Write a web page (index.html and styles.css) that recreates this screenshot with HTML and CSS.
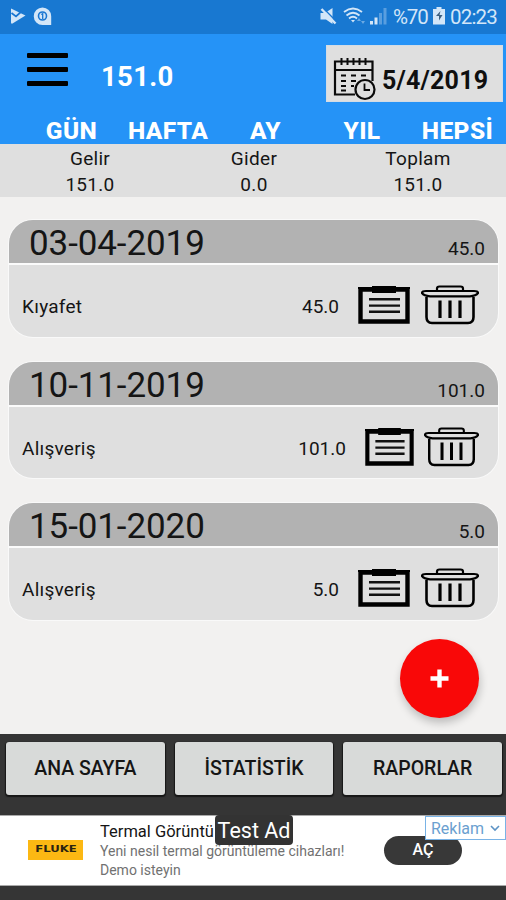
FILE: index.html
```html
<!DOCTYPE html>
<html lang="tr">
<head>
    <meta charset="UTF-8">
    <title>Gelir Gider</title>
    <link rel="stylesheet" href="styles.css">
</head>
<body>
<svg class="defs" width="0" height="0">
    <symbol id="note" viewBox="0 0 52 38" preserveAspectRatio="none">
        <path d="M2.500 3.500H49.500V35.500H2.500Z" fill="none" stroke="#000" stroke-width="4.400"/>
        <path d="M0 1h52v2H0zM14 0h24v7H14z"/>
        <path d="M11 13.200H42M11 19.600H42M11 25.800H42" stroke="#111" stroke-width="2.400"/>
    </symbol>
    <symbol id="trash" viewBox="0 0 58 40" preserveAspectRatio="none">
        <g fill="none" stroke="#000" stroke-width="2.200">
            <path d="M16 6V3.500Q16 1.500 18.500 1.500H39.500Q42 1.500 42 3.500V6"/>
            <path d="M5 6H53Q57 6 57 8.200Q55 11 49 11.300H9Q3 11 1 8.200Q1 6 5 6Z"/>
            <path d="M5.500 12V32Q5.500 38 11 38H47Q52.500 38 52.500 32V12" stroke-width="2.600"/>
            <path d="M19 15.500V33M29 15.500V33M39 15.500V33" stroke-width="3.200"/>
        </g>
    </symbol>
</svg>

<div class="statusbar">
    <svg width="44" height="20" viewBox="0 0 44 20" fill="#d3e6f8">
        <path d="M1 1.500L15.500 8.500L2.500 16.500Q1 17 1 15.500Z"/>
        <path d="M1.500 6L6 9.500L12 4" fill="none" stroke="#1976d2" stroke-width="1.700"/>
        <path d="M32.500 0.500a8.700 8.700 0 1 0 0 17.500h8.700V9.200a8.700 8.700 0 0 0-8.700-8.700z"/>
        <circle cx="32.500" cy="9" r="4" fill="none" stroke="#1976d2" stroke-width="1.600"/>
        <path d="M31.300 7.500L32.700 6.700V12" fill="none" stroke="#1976d2" stroke-width="1.300"/>
    </svg>
    <div class="status-right">
        <svg width="68" height="20" viewBox="0 0 68 20" fill="#d3e6f8">
            <path d="M0.500 6H5L12.500 1V17L6 12.500H0.500Z"/>
            <path d="M3 1L17 15" stroke="#1976d2" stroke-width="1.500"/>
            <path d="M1.500 2L15.500 16.500" stroke="#d3e6f8" stroke-width="2.400"/>
            <g fill="none" stroke="#d3e6f8" stroke-width="1.800">
                <path d="M24 5Q33 -2 42 5M26.500 8.500Q33 3 39.500 8.500M29 11.500Q33 8 37 11.500"/>
            </g>
            <path d="M31 13h4l-2 2.500z"/>
            <path d="M37 14l2-3 2 3zM41 14h4l-2 3z" opacity=".45"/>
            <path d="M50 14h3v3.500h-3zM54.500 10.500h3v7h-3z"/>
            <path d="M59 6h3v11.500h-3zM63.500 1h3v16.500h-3z" opacity=".35"/>
        </svg>
        <span class="percent">%70</span>
        <svg width="12" height="18" viewBox="0 0 12 18">
            <path d="M3.500 0h5v2H12v15.500H0V2H3.500z" fill="#d3e6f8"/>
            <path d="M7.500 4L3 9h3v4.500L9.500 8H6.500z" fill="#3c5f80"/>
        </svg>
        <span class="clock">02:23</span>
    </div>
</div>

<div class="header">
    <div class="toolbar">
        <div class="menu"><i></i><i></i><i></i></div>
        <span class="balance">151.0</span>
        <div class="datepicker">
            <svg width="43" height="44" viewBox="0 0 43 44" fill="none" stroke="#0a0a0a" stroke-width="2.200">
                <path d="M22 37.500H2V4.500H39.500V24M2 13H39.500"/>
                <path d="M8.500 1V8M14.500 1V8M20.500 1V8M26.500 1V8M32.500 1V8" stroke-width="2"/>
                <path d="M8 18.500h5M18 18.500h5M28 18.500h5M8 24h5M18 24h5M8 29h5M18 29h3M8 33.500h5" stroke-width="2"/>
                <circle cx="32" cy="32.500" r="9.500" fill="#dfdfdf"/>
                <path d="M31.500 26.500V33H37" stroke-width="1.800"/>
            </svg>
            <span>5/4/2019</span>
        </div>
    </div>
    <div class="tabs">
        <span>GÜN</span>
        <span>HAFTA</span>
        <span>AY</span>
        <span>YIL</span>
        <span>HEPSİ</span>
    </div>
</div>

<div class="summary">
    <div>Gelir<br>151.0</div>
    <div>Gider<br>0.0</div>
    <div>Toplam<br>151.0</div>
</div>

<div class="list">
    <div class="card">
        <div class="card-head"><span class="date">03-04-2019</span><span>45.0</span></div>
        <div class="card-row">
            <span class="name">Kıyafet</span>
            <span class="amount">45.0</span>
            <svg class="note"><use href="#note"/></svg>
            <svg class="trash"><use href="#trash"/></svg>
        </div>
    </div>
    <div class="card">
        <div class="card-head"><span class="date">10-11-2019</span><span>101.0</span></div>
        <div class="card-row narrow">
            <span class="name">Alışveriş</span>
            <span class="amount">101.0</span>
            <svg class="note"><use href="#note"/></svg>
            <svg class="trash"><use href="#trash"/></svg>
        </div>
    </div>
    <div class="card">
        <div class="card-head"><span class="date">15-01-2020</span><span>5.0</span></div>
        <div class="card-row">
            <span class="name">Alışveriş</span>
            <span class="amount">5.0</span>
            <svg class="note"><use href="#note"/></svg>
            <svg class="trash"><use href="#trash"/></svg>
        </div>
    </div>
    <div class="add">
        <svg width="19" height="19" viewBox="0 0 20 20"><path d="M10 0.500V19.500M0.500 10H19.500" stroke="#fff" stroke-width="4.600"/></svg>
    </div>
</div>

<div class="bottom">
    <div class="nav">
        <div class="nav-btn">ANA SAYFA</div>
        <div class="nav-btn">İSTATİSTİK</div>
        <div class="nav-btn">RAPORLAR</div>
    </div>
    <div class="ad">
        <div class="logo"><span>FLUKE</span></div>
        <div class="ad-text">
            <div class="ad-title">Termal Görüntü</div>
            <div class="ad-desc">Yeni nesil termal görüntüleme cihazları!</div>
            <div class="ad-desc">Demo isteyin</div>
        </div>
        <div class="open">AÇ</div>
        <div class="test">Test Ad</div>
        <div class="reklam">Reklam
            <svg width="10" height="7" viewBox="0 0 10 7"><path d="M1 1L5 5L9 1" fill="none" stroke="#5d93c5" stroke-width="1.600"/></svg>
        </div>
    </div>
</div>
</body>
</html>
```
FILE: styles.css
```css
* {
    box-sizing: border-box;
}
body {
    margin: 0;
    width: 506px;
    height: 900px;
    overflow: hidden;
    display: flex;
    flex-direction: column;
    background: #f2f1f0;
    color: #151515;
    font-family: Roboto, sans-serif;
    font-size: 19px;
}
svg {
    display: block;
    flex: none;
}
.defs {
    position: absolute;
}
.statusbar {
    height: 34px;
    flex: none;
    background: #1878d1;
    color: #d3e6f8;
    display: flex;
    justify-content: space-between;
    padding: 7px 9px 0 10px;
}
.status-right {
    display: flex;
    align-items: flex-start;
    font-size: 20.500px;
    line-height: 21px;
}
.percent {
    width: 34px;
    margin: 0 6px 0 5px;
    letter-spacing: -1.2px;
    white-space: nowrap;
}
.clock {
    width: 47px;
    margin-left: 5px;
    letter-spacing: -0.8px;
    white-space: nowrap;
}
.header {
    height: 110px;
    flex: none;
    background: #2593f7;
    color: #fff;
}
.toolbar {
    height: 79px;
    display: flex;
    padding: 11px 3px 0 27px;
}
.menu {
    width: 41px;
    padding-top: 8px;
    display: flex;
    flex-direction: column;
    gap: 9px;
}
.menu i {
    height: 5px;
    background: #000;
    border-radius: 1px;
}
.balance {
    margin: 15px 0 0 33px;
    font-size: 27.500px;
    font-weight: 700;
    line-height: 33px;
    letter-spacing: 0.3px;
}
.datepicker {
    width: 177px;
    height: 57px;
    margin-left: auto;
    padding: 11px 0 0 6px;
    background: #dfdfdf;
    border: 1px solid #d3dce5;
    color: #0f0f0f;
    display: flex;
    gap: 6px;
    font-size: 25px;
    font-weight: 700;
    letter-spacing: 0.2px;
}
.datepicker span {
    line-height: 47px;
}
.tabs {
    height: 31px;
    display: grid;
    grid-template-columns: 101px 92px 103px 90px 101px;
    padding: 3px 0 0 21px;
    font-size: 24.500px;
    font-weight: 800;
    line-height: 30px;
    letter-spacing: 0.4px;
    text-align: center;
}
.summary {
    height: 53px;
    flex: none;
    background: #dfdfdf;
    display: grid;
    grid-template-columns: 164px 164px 164px;
    padding: 2px 0 0 8px;
    line-height: 26px;
    letter-spacing: 0.3px;
    text-align: center;
}
.list {
    height: 537px;
    flex: none;
    padding: 23px 8px 0 9px;
    display: flex;
    flex-direction: column;
    gap: 25px;
    position: relative;
}
.card {
    height: 116.500px;
    flex: none;
    border-radius: 24px;
    overflow: hidden;
    background: #dfdfdf;
    box-shadow: 0 0 0 1px #f9f9f9;
}
.card-head {
    height: 45px;
    background: #b2b2b2;
    border-bottom: 2px solid #fbfbfb;
    display: flex;
    justify-content: space-between;
    align-items: baseline;
    padding: 3px 13px 0 20px;
}
.date {
    font-size: 35px;
    line-height: 41px;
    letter-spacing: -0.1px;
}
.card-row {
    height: 71px;
    display: flex;
    align-items: flex-start;
    padding: 20px 19px 0 13px;
}
.card-row span {
    line-height: 43px;
}
.name {
    letter-spacing: 0.25px;
}
.amount {
    margin-left: auto;
}
.note {
    width: 52px;
    height: 38px;
    margin: 1px 11px 0 19px;
}
.trash {
    width: 58px;
    height: 40px;
}
.narrow .note {
    width: 49px;
    margin-right: 10px;
}
.narrow .trash {
    width: 55px;
}
.add {
    position: absolute;
    right: 27px;
    bottom: 16px;
    width: 79px;
    height: 79px;
    border-radius: 50%;
    background: #f90808;
    box-shadow: 1px 5px 8px rgba(0, 0, 0, 0.22);
    display: flex;
    align-items: center;
    justify-content: center;
}
.add svg {
    margin-right: 1px;
}
.bottom {
    height: 166px;
    flex: none;
    background: #353535;
}
.nav {
    height: 81px;
    display: flex;
    gap: 10px;
    padding: 8px 4px 20px 6px;
}
.nav-btn {
    flex: 1;
    background: #d8dad9;
    border-radius: 3px;
    box-shadow: 0 1px 1px 1px #171717;
    font-size: 19.500px;
    font-weight: 500;
    line-height: 54px;
    text-align: center;
}
.ad {
    height: 71px;
    position: relative;
    background: #fff;
    border-top: 1px solid #aaa;
    border-bottom: 1px solid #aaa;
    display: flex;
}
.logo {
    width: 55px;
    height: 20px;
    margin: 24px 17px 0 28px;
    background: #fcb813;
    color: #2a2410;
    font: 700 9px/18px "DejaVu Sans", sans-serif;
    text-align: center;
}
.logo span {
    display: inline-block;
    transform: scaleX(1.3);
}
.ad-text {
    padding-top: 6px;
    white-space: nowrap;
}
.ad-title {
    width: 115px;
    overflow: hidden;
    font-size: 16.500px;
    line-height: 20px;
}
.ad-desc {
    font-size: 14px;
    line-height: 18.500px;
    color: #717171;
}
.open {
    position: absolute;
    left: 384px;
    top: 20px;
    width: 78px;
    height: 29px;
    border-radius: 15px;
    background: #383838;
    color: #fff;
    font-size: 16px;
    font-weight: 500;
    line-height: 28px;
    text-align: center;
}
.test {
    position: absolute;
    left: 215px;
    top: -1px;
    width: 78px;
    height: 30px;
    border-radius: 4px;
    background: #333;
    color: #fff;
    font-size: 21.500px;
    line-height: 31px;
    text-align: center;
}
.reklam {
    position: absolute;
    right: 0;
    top: 0;
    width: 81px;
    height: 24px;
    padding-left: 5px;
    background: #fff;
    border: 1px solid #79b3e6;
    color: #6b9fd0;
    display: flex;
    align-items: center;
    gap: 6px;
    font-size: 16px;
}
```
